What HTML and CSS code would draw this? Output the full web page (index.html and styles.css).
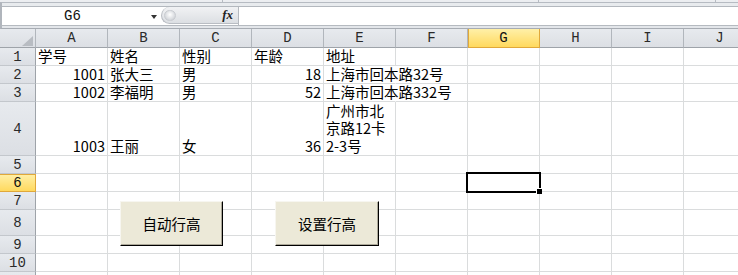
FILE: index.html
```html
<!DOCTYPE html>
<html lang="zh-CN">
<head>
<meta charset="utf-8">
<title>Excel 行高</title>
<link rel="stylesheet" href="styles.css">
</head>
<body>
<div class="app">
  <div class="top1"><span class="seg s1"></span><span class="seg s2"></span><span class="seg s3"></span></div>
  <div class="top2"></div>
  <div class="fbar">
    <div class="namebox"><span class="ref">G6</span><span class="arrow"></span></div>
    <div class="capsule"><span class="pill"></span><span class="fx">fx</span></div>
    <div class="input"></div>
  </div>
  <div class="sep"></div>
  <div class="sheet">
    <div class="ch corner"></div><div class="ch">A</div><div class="ch">B</div><div class="ch">C</div><div class="ch">D</div><div class="ch">E</div><div class="ch">F</div><div class="ch hl">G</div><div class="ch">H</div><div class="ch">I</div><div class="ch">J</div>

    <div class="rh">1</div><div>学号</div><div>姓名</div><div>性别</div><div>年龄</div><div>地址</div><div></div><div></div><div></div><div></div><div></div>

    <div class="rh">2</div><div class="r">1001</div><div>张大三</div><div>男</div><div class="r">18</div><div class="ov">上海市回本路32号</div><div></div><div></div><div></div><div></div><div></div>

    <div class="rh">3</div><div class="r">1002</div><div>李福明</div><div>男</div><div class="r">52</div><div class="ov">上海市回本路332号</div><div></div><div></div><div></div><div></div><div></div>

    <div class="rh">4</div><div class="r">1003</div><div>王丽</div><div>女</div><div class="r">36</div><div class="wrap"><span class="lines">广州市北<br>京路12卡<br>2-3号</span></div><div></div><div></div><div></div><div></div><div></div>

    <div class="rh">5</div><div></div><div></div><div></div><div></div><div></div><div></div><div></div><div></div><div></div><div></div>

    <div class="rh hl">6</div><div></div><div></div><div></div><div></div><div></div><div></div><div class="g6"><span class="handle"></span></div><div></div><div></div><div></div>

    <div class="rh">7</div><div></div><div></div><div></div><div></div><div></div><div></div><div></div><div></div><div></div><div></div>

    <div class="rh">8</div><div></div><div></div><div></div><div></div><div></div><div></div><div></div><div></div><div></div><div></div>

    <div class="rh">9</div><div></div><div></div><div></div><div></div><div></div><div></div><div></div><div></div><div></div><div></div>

    <div class="rh">10</div><div></div><div></div><div></div><div></div><div></div><div></div><div></div><div></div><div></div><div></div>

    <div class="rh"></div><div></div><div></div><div></div><div></div><div></div><div></div><div></div><div></div><div></div><div></div>

    <button class="btn btn1">自动行高</button>
    <button class="btn btn2">设置行高</button>
  </div>
</div>
</body>
</html>
```

FILE: styles.css
```css
html, body {
  margin: 0;
  padding: 0;
  background: #fff;
}

.app {
  width: 738px;
  height: 275px;
  overflow: hidden;
  position: relative;
  background: #fff;
  font-family: "Noto Sans CJK SC", sans-serif;
}

.top1 {
  height: 2px;
  display: flex;
  background: #eceef1;
}
.seg {
  display: block;
  height: 2px;
  border-right: 1px solid #b6bbc2;
}
.s1 { width: 222px; }
.s2 { width: 315px; }
.s3 { width: 176px; }

.top2 {
  height: 3px;
  background: #e8ebee;
  border-top: 1px solid #b6bbc2;
  border-bottom: 1px solid #b3b8be;
  border-left: 2px solid #b0b5bc;
}

.fbar {
  height: 18px;
  display: flex;
  align-items: flex-start;
  background: #fff;
  border-left: 2px solid #b0b5bc;
}

.namebox {
  width: 156px;
  height: 18px;
  position: relative;
  display: flex;
  align-items: center;
}
.ref {
  width: 141px;
  text-align: center;
  font: 14px/18px "Liberation Mono", monospace;
  color: #111;
}
.arrow {
  position: absolute;
  left: 149px;
  top: 8px;
  width: 0;
  height: 0;
  border-left: 3px solid transparent;
  border-right: 3px solid transparent;
  border-top: 4px solid #333;
}

.capsule {
  margin-left: 3px;
  width: 77px;
  height: 17px;
  box-sizing: border-box;
  border: 1px solid #b9bdc3;
  border-right: none;
  border-top: none;
  border-radius: 9px 0 0 9px;
  background: linear-gradient(#f1f2f4, #dcdfe3);
  display: flex;
  align-items: center;
  justify-content: space-between;
  padding: 0 5px 0 2px;
}
.pill {
  width: 12px;
  height: 11px;
  border-radius: 6px;
  background: radial-gradient(circle at 50% 40%, #ffffff, #d2d5da 75%);
  border: 1px solid #c8cbd0;
  box-sizing: border-box;
}
.fx {
  font: italic bold 13px/14px "Liberation Serif", serif;
  color: #222;
}

.input {
  flex: 1;
  height: 18px;
  border-left: 1px solid #b5b9bf;
  background: #fff;
}

.sep {
  height: 2px;
  background: #e3e6ea;
  border-top: 1px solid #b5bac0;
  border-bottom: 1px solid #a7acb3;
  border-left: 2px solid #b0b5bc;
}

.sheet {
  position: relative;
  display: grid;
  grid-template-columns: 36px repeat(10, 72px);
  grid-template-rows: 19px 18px 18px 18px 54px 18px 18px 18px 26px 18px 18px 18px;
}

.sheet > div {
  box-sizing: border-box;
  border-right: 1px solid #dadcdd;
  border-bottom: 1px solid #dadcdd;
  display: flex;
  align-items: flex-end;
  padding: 0 2px 1px 2px;
  font-family: "Noto Sans CJK SC", sans-serif;
  font-size: 14.5px;
  line-height: 17px;
  color: #000;
  white-space: nowrap;
  min-width: 0;
}

.sheet > .r {
  justify-content: flex-end;
  padding-right: 2px;
}

.sheet > .ov {
  border-right-color: transparent;
}

.sheet > .wrap {
  line-height: 17.5px;
}
.lines {
  display: block;
}

.sheet > .ch,
.sheet > .rh {
  background: linear-gradient(#e7eaee, #dcdfe4);
  justify-content: center;
  align-items: center;
  padding: 0;
  font-family: "Liberation Mono", monospace;
  font-size: 14px;
  color: #2a2a2a;
}
.sheet > .ch {
  border-right-color: #b1b6bc;
  border-bottom-color: #9ea3a9;
  padding-top: 1px;
}
.sheet > .rh {
  border-right-color: #9ea3a9;
  border-bottom-color: #c3c7cc;
  padding-top: 2px;
}
.sheet > .hl {
  background: linear-gradient(#fff0a8, #ffd95e);
  border-right-color: #e0a83a;
  border-bottom-color: #e0a83a;
  color: #111;
}
.sheet > .ch.hl {
  box-shadow: inset 1px 0 0 #e0a83a;
}
.sheet > .rh.hl {
  box-shadow: inset 0 1px 0 #e0a83a;
}

.sheet > .corner {
  position: relative;
}
.corner::after {
  content: "";
  position: absolute;
  left: 22px;
  top: 7px;
  width: 11px;
  height: 10px;
  background: #b8bcc2;
  clip-path: polygon(100% 0, 100% 100%, 0 100%);
}

.sheet > .g6 {
  position: relative;
}
.g6::after {
  content: "";
  position: absolute;
  left: -2px;
  top: -2px;
  width: 75px;
  height: 21px;
  border: 2px solid #000;
  box-sizing: border-box;
}
.handle {
  position: absolute;
  left: 69px;
  top: 15px;
  width: 5px;
  height: 5px;
  background: #000;
  box-shadow: -1px -1px 0 #fff;
  z-index: 2;
}

.btn {
  position: absolute;
  top: 172px;
  height: 45px;
  box-sizing: border-box;
  margin: 0;
  padding: 0;
  background: #ece9d8;
  border: 1px solid;
  border-color: #f7f6f0 #000 #000 #f7f6f0;
  box-shadow: inset -1px -1px 0 #aca899;
  border-radius: 0;
  font-family: "Noto Sans CJK SC", sans-serif;
  font-size: 14.5px;
  line-height: 20px;
  color: #000;
  text-align: center;
}
.btn1 {
  left: 120px;
  width: 103px;
}
.btn2 {
  left: 275px;
  width: 104px;
}
```
